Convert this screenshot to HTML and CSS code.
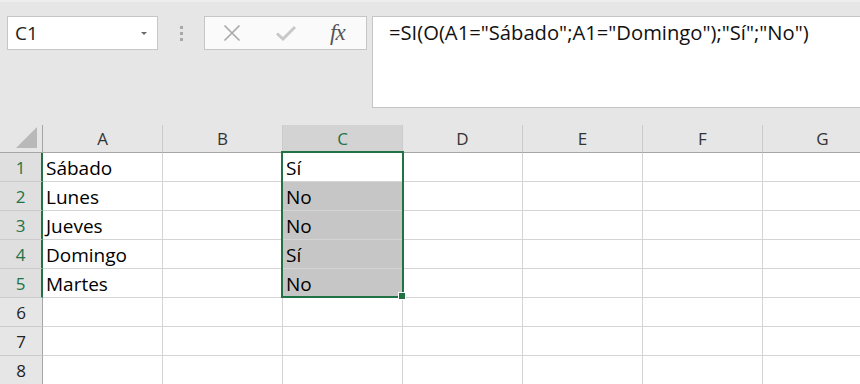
FILE: index.html
```html
<!DOCTYPE html>
<html lang="es">
<head>
    <meta charset="UTF-8">
    <title>Excel - SI con O</title>
    <link rel="stylesheet" href="styles.css">
</head>
<body>
    <div class="toolbar">
        <div class="name-box">
            <span class="name-text">C1</span>
            <span class="drop-arrow"></span>
        </div>
        <div class="grip">
            <span></span><span></span><span></span>
        </div>
        <div class="func-box">
            <svg class="icon" width="18" height="18" viewBox="0 0 18 18">
                <path d="M1.5 1.5 L16.5 16.5 M16.5 1.5 L1.5 16.5" stroke="#a8a8a8" stroke-width="1.6" fill="none"/>
            </svg>
            <svg class="icon" width="20" height="16" viewBox="0 0 20 16">
                <path d="M1 8.5 L7 14 L19 2" stroke="#c8c8c8" stroke-width="3" fill="none"/>
            </svg>
            <span class="fx">fx</span>
        </div>
        <div class="formula-box">=SI(O(A1="Sábado";A1="Domingo");"Sí";"No")</div>
    </div>

    <div class="sheet">
        <div class="hdr corner">
            <svg width="22" height="22" viewBox="0 0 22 22">
                <polygon points="21,0 21,21 0,21" fill="#b9b9b9"/>
            </svg>
        </div>
        <div class="hdr col">A</div>
        <div class="hdr col">B</div>
        <div class="hdr col active">C</div>
        <div class="hdr col">D</div>
        <div class="hdr col">E</div>
        <div class="hdr col">F</div>
        <div class="hdr col">G</div>

        <div class="hdr row active">1</div>
        <div class="cell">Sábado</div><div class="cell"></div><div class="cell">Sí</div>
        <div class="cell"></div><div class="cell"></div><div class="cell"></div><div class="cell"></div>

        <div class="hdr row active">2</div>
        <div class="cell">Lunes</div><div class="cell"></div><div class="cell sel">No</div>
        <div class="cell"></div><div class="cell"></div><div class="cell"></div><div class="cell"></div>

        <div class="hdr row active">3</div>
        <div class="cell">Jueves</div><div class="cell"></div><div class="cell sel">No</div>
        <div class="cell"></div><div class="cell"></div><div class="cell"></div><div class="cell"></div>

        <div class="hdr row active">4</div>
        <div class="cell">Domingo</div><div class="cell"></div><div class="cell sel">Sí</div>
        <div class="cell"></div><div class="cell"></div><div class="cell"></div><div class="cell"></div>

        <div class="hdr row active">5</div>
        <div class="cell">Martes</div><div class="cell"></div><div class="cell sel">No</div>
        <div class="cell"></div><div class="cell"></div><div class="cell"></div><div class="cell"></div>

        <div class="hdr row">6</div>
        <div class="cell"></div><div class="cell"></div><div class="cell"></div>
        <div class="cell"></div><div class="cell"></div><div class="cell"></div><div class="cell"></div>

        <div class="hdr row">7</div>
        <div class="cell"></div><div class="cell"></div><div class="cell"></div>
        <div class="cell"></div><div class="cell"></div><div class="cell"></div><div class="cell"></div>

        <div class="hdr row">8</div>
        <div class="cell"></div><div class="cell"></div><div class="cell"></div>
        <div class="cell"></div><div class="cell"></div><div class="cell"></div><div class="cell"></div>

        <div class="selection"></div>
        <div class="fill-handle"></div>
    </div>
</body>
</html>
```

FILE: styles.css
```css
body {
    margin: 0;
    padding: 0;
    width: 860px;
    height: 384px;
    overflow: hidden;
    background: #fff;
    font-family: "Open Sans", "Noto Sans", sans-serif;
    color: #000;
}
.toolbar {
    height: 125px;
    box-sizing: border-box;
    background: #e6e6e6;
    border-top: 2px solid #ededed;
    padding: 14px 0 0 7px;
    display: flex;
    align-items: flex-start;
}
.name-box {
    width: 151px;
    height: 34px;
    box-sizing: border-box;
    background: #fff;
    border: 1px solid #c6c6c6;
    display: flex;
    align-items: center;
    justify-content: space-between;
    padding: 0 10px 0 7px;
}
.name-text {
    font-size: 19px;
    line-height: 31px;
    padding-top: 1px;
    color: #222;
}
.drop-arrow {
    width: 0;
    height: 0;
    border-left: 3px solid transparent;
    border-right: 3px solid transparent;
    border-top: 3px solid #6a6a6a;
    margin-top: 1px;
}
.grip {
    width: 46px;
    height: 34px;
    display: flex;
    flex-direction: column;
    align-items: center;
    justify-content: center;
    gap: 3px;
}
.grip span {
    width: 3px;
    height: 3px;
    background: #a8a8a8;
}
.func-box {
    width: 163px;
    height: 34px;
    box-sizing: border-box;
    background: #fafafa;
    border: 1px solid #c6c6c6;
    display: flex;
    align-items: center;
    padding: 0 0 0 18px;
}
.func-box .icon {
    display: block;
}
.func-box .icon:first-child {
    margin-right: 35px;
}
.func-box .icon:nth-child(2) {
    margin-right: 34px;
}
.fx {
    font-family: "Liberation Serif", "DejaVu Serif", serif;
    font-style: italic;
    font-size: 23px;
    color: #555;
    letter-spacing: -1px;
}
.formula-box {
    margin-left: 5px;
    flex: 1;
    height: 92px;
    box-sizing: border-box;
    background: #fff;
    border: 1px solid #c6c6c6;
    border-right: none;
    padding: 1px 0 0 16px;
    font-size: 20.2px;
    line-height: 28px;
    color: #111;
    white-space: nowrap;
}
.sheet {
    position: relative;
    display: grid;
    grid-template-columns: 43px repeat(7, 120px);
    grid-template-rows: 28px repeat(8, 29px);
}
.hdr {
    box-sizing: border-box;
    background: #e6e6e6;
    color: #333;
    font-size: 17px;
    text-align: center;
    border-right: 1px solid #cbcbcb;
    border-bottom: 1px solid #cbcbcb;
}
.hdr.col {
    line-height: 26px;
    padding-top: 1px;
    border-bottom: 1px solid #a6a6a6;
}
.hdr.col.active {
    background: #d3d3d3;
    color: #217346;
}
.hdr.corner {
    display: flex;
    align-items: flex-end;
    justify-content: flex-end;
    padding: 0 4px 3px 0;
    border-bottom: 1px solid #a6a6a6;
    border-right: 1px solid #a6a6a6;
}
.hdr.corner svg {
    display: block;
}
.hdr.row {
    line-height: 28px;
    padding-top: 1px;
    border-right: 1px solid #a6a6a6;
    color: #222;
}
.hdr.row.active {
    background: #dfdfdf;
    color: #217346;
    border-right: 2px solid #217346;
}
.cell {
    box-sizing: border-box;
    border-right: 1px solid #d4d4d4;
    border-bottom: 1px solid #d4d4d4;
    font-size: 19px;
    line-height: 28px;
    padding: 1px 0 0 3px;
    white-space: nowrap;
    overflow: hidden;
}
.cell.sel {
    background: #c6c6c6;
}
.selection {
    position: absolute;
    left: 281px;
    top: 26px;
    width: 123px;
    height: 147px;
    box-sizing: border-box;
    border: 2px solid #217346;
    pointer-events: none;
}
.fill-handle {
    position: absolute;
    left: 398px;
    top: 167px;
    width: 6px;
    height: 6px;
    background: #217346;
    border: 1px solid #fff;
}
```
